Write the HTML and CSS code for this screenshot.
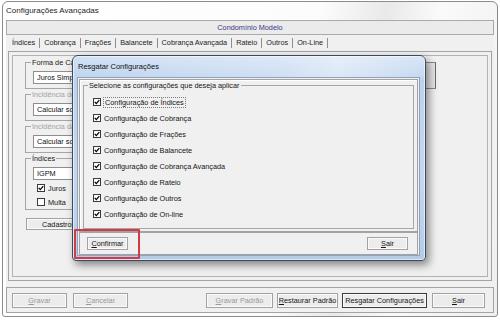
FILE: index.html
```html
<!DOCTYPE html>
<html>
<head>
<meta charset="utf-8">
<link rel="stylesheet" href="styles.css">
</head>
<body>
<div class="win">
  <div class="win-title">Configurações Avançadas</div>
  <div class="client">
    <div class="header">Condomínio Modelo</div>
    <div class="tabs">
      <span class="tab">Índices</span>
      <span class="tab">Cobrança</span>
      <span class="tab">Frações</span>
      <span class="tab">Balancete</span>
      <span class="tab">Cobrança Avançada</span>
      <span class="tab">Rateio</span>
      <span class="tab">Outros</span>
      <span class="tab">On-Line</span>
    </div>
    <div class="panel">
      <div class="panel-inner">
        <div class="left-col">
          <fieldset class="grp"><legend>Forma de Cálculo</legend><div class="edit">Juros Simples</div></fieldset>
          <fieldset class="grp dis"><legend>Incidência do Juros</legend><div class="edit">Calcular sobre o valor</div></fieldset>
          <fieldset class="grp dis"><legend>Incidência da Multa</legend><div class="edit">Calcular sobre o valor</div></fieldset>
          <fieldset class="grp g4"><legend>Índices</legend><div class="edit">IGPM</div>
            <div class="chk first"><svg class="cb" viewBox="0 0 8 8" width="8" height="8"><rect x="0.5" y="0.5" width="7" height="7" fill="#fff" stroke="#3a3a3a"/><path d="M1.7 3.9 L3.3 5.6 L6.3 2.1" fill="none" stroke="#000" stroke-width="1.3"/></svg><span>Juros</span></div>
            <div class="chk"><svg class="cb" viewBox="0 0 8 8" width="8" height="8"><rect x="0.5" y="0.5" width="7" height="7" fill="#fff" stroke="#3a3a3a"/></svg><span>Multa</span></div>
          </fieldset>
          <div class="btn cad">Cadastros de Índices</div>
        </div>
        <div class="right-col"><div class="hidden-box"></div></div>
      </div>
    </div>
    <div class="btnbar">
      <div class="btn dis w55"><u>G</u>ravar</div>
      <div class="btn dis w55 ml6"><u>C</u>ancelar</div>
      <div class="spacer"></div>
      <div class="btn dis w67"><u>G</u>ravar Padrão</div>
      <div class="btn w61 ml4"><u>R</u>estaurar Padrão</div>
      <div class="btn def w85 ml4">Resgatar Configurações</div>
      <div class="btn w53 ml5"><u>S</u>air</div>
    </div>
  </div>
</div>

<div class="dlg">
  <div class="dlg-title">Resgatar Configurações</div>
  <div class="dlg-client">
    <div class="dlg-top">
      <fieldset class="sel">
        <legend>Selecione as configurações que deseja aplicar</legend>
        <div class="row"><svg class="cb" viewBox="0 0 8 8" width="8" height="8"><rect x="0.5" y="0.5" width="7" height="7" fill="#fff" stroke="#3a3a3a"/><path d="M1.7 3.9 L3.3 5.6 L6.3 2.1" fill="none" stroke="#000" stroke-width="1.3"/></svg><span class="focus">Configuração de Índices</span></div>
        <div class="row"><svg class="cb" viewBox="0 0 8 8" width="8" height="8"><rect x="0.5" y="0.5" width="7" height="7" fill="#fff" stroke="#3a3a3a"/><path d="M1.7 3.9 L3.3 5.6 L6.3 2.1" fill="none" stroke="#000" stroke-width="1.3"/></svg><span>Configuração de Cobrança</span></div>
        <div class="row"><svg class="cb" viewBox="0 0 8 8" width="8" height="8"><rect x="0.5" y="0.5" width="7" height="7" fill="#fff" stroke="#3a3a3a"/><path d="M1.7 3.9 L3.3 5.6 L6.3 2.1" fill="none" stroke="#000" stroke-width="1.3"/></svg><span>Configuração de Frações</span></div>
        <div class="row"><svg class="cb" viewBox="0 0 8 8" width="8" height="8"><rect x="0.5" y="0.5" width="7" height="7" fill="#fff" stroke="#3a3a3a"/><path d="M1.7 3.9 L3.3 5.6 L6.3 2.1" fill="none" stroke="#000" stroke-width="1.3"/></svg><span>Configuração de Balancete</span></div>
        <div class="row"><svg class="cb" viewBox="0 0 8 8" width="8" height="8"><rect x="0.5" y="0.5" width="7" height="7" fill="#fff" stroke="#3a3a3a"/><path d="M1.7 3.9 L3.3 5.6 L6.3 2.1" fill="none" stroke="#000" stroke-width="1.3"/></svg><span>Configuração de Cobrança Avançada</span></div>
        <div class="row"><svg class="cb" viewBox="0 0 8 8" width="8" height="8"><rect x="0.5" y="0.5" width="7" height="7" fill="#fff" stroke="#3a3a3a"/><path d="M1.7 3.9 L3.3 5.6 L6.3 2.1" fill="none" stroke="#000" stroke-width="1.3"/></svg><span>Configuração de Rateio</span></div>
        <div class="row"><svg class="cb" viewBox="0 0 8 8" width="8" height="8"><rect x="0.5" y="0.5" width="7" height="7" fill="#fff" stroke="#3a3a3a"/><path d="M1.7 3.9 L3.3 5.6 L6.3 2.1" fill="none" stroke="#000" stroke-width="1.3"/></svg><span>Configuração de Outros</span></div>
        <div class="row"><svg class="cb" viewBox="0 0 8 8" width="8" height="8"><rect x="0.5" y="0.5" width="7" height="7" fill="#fff" stroke="#3a3a3a"/><path d="M1.7 3.9 L3.3 5.6 L6.3 2.1" fill="none" stroke="#000" stroke-width="1.3"/></svg><span>Configuração de On-line</span></div>
      </fieldset>
    </div>
    <div class="dlg-bottom">
      <div class="btn dbtn"><u>C</u>onfirmar</div>
      <div class="btn dbtn"><u>S</u>air</div>
    </div>
  </div>
  <div class="highlight"></div>
</div>
</body>
</html>
```
FILE: styles.css
```css
* { box-sizing: border-box; }
html, body { margin: 0; padding: 0; }
body {
  width: 500px; height: 320px; overflow: hidden; position: relative;
  background: #fff;
  font-family: "Liberation Sans", Arial, sans-serif;
  font-size: 7.3px; color: #151515;
}
u { text-decoration: underline; text-underline-offset: 1px; }

/* main window */
.win {
  margin: 1px 0 0 2px; width: 496px; height: 316px;
  border: 1px solid #8c8c8c; border-radius: 6px 6px 3px 3px;
  background: linear-gradient(100deg, #ffffff 0%, #fcfcfc 58%, #e9e9e9 70%, #fafafa 80%, #efefef 100%);
  display: flex; flex-direction: column;
}
.win-title { height: 18px; line-height: 17px; padding-left: 3px; font-size: 8px; color: #1e1e1e; }
.client {
  flex: 1; margin: 0 3px 3px 3px; background: #f0f0f0;
  display: flex; flex-direction: column;
}
.header {
  height: 15px; line-height: 13px; text-align: center;
  border: 1px solid #a9a9a9; background: #ebebeb; color: #36368a;
}
.tabs { height: 16px; display: flex; align-items: center; padding-left: 2px; }
.tab { padding: 0 4px; line-height: 10px; border-right: 1px solid #8e8e8e; color: #222; }

.panel { flex: 1; margin: 0 2px; border: 1px solid #a3a3a3; padding: 3px; display: flex; }
.panel-inner { flex: 1; border: 1px solid #b2b2b2; display: flex; }
.left-col { width: 175px; padding: 1.5px 0 0 12px; display: flex; flex-direction: column; align-items: flex-start; }
.right-col { flex: 1; padding: 6px 51px 0 0; display: flex; justify-content: flex-end; align-items: flex-start; }
.hidden-box { width: 100px; height: 27px; border: 1px solid #8a8a8a; border-right-color: #6a6a6a; background: #e6e6e6; }

.grp {
  margin: 0 0 1px 0; padding: 4px 7px 4px 7px; width: 160px;
  border: 1px solid #a6a6a6; min-width: 0;
}
.grp legend { margin-left: -2px; padding: 0 1px; line-height: 9px; color: #1a1a1a; }
.grp.dis legend { color: #a3a3a3; }
.grp.g4 { padding-bottom: 0; }
.edit {
  height: 13px; width: 140px; border: 1px solid #8e8e8e; background: #fff;
  line-height: 11px; padding-left: 3px; color: #111; white-space: nowrap;
}
.chk { height: 14px; display: flex; align-items: center; gap: 3px; padding-left: 4px; }
.chk.first { margin-top: 1.5px; }
.cb { display: block; flex: none; }

.btn {
  height: 15px; border: 1px solid #a2a2a2; background: #ececec;
  box-shadow: inset 0 0 0 1px #fbfbfb;
  display: flex; align-items: center; justify-content: center;
  color: #151515; white-space: nowrap;
}
.btn.dis { color: #9a9a9a; }
.btn.def { border-color: #3c3c3c; }
.btn.cad { margin: 7px 0 0 1px; height: 12px; width: 144px; justify-content: flex-start; padding-left: 15px; }

.btnbar {
  height: 26px; margin-top: 6px; border: 1px solid #a3a3a3;
  padding: 5px 8px 0 5px; display: flex; align-items: flex-start;
}
.spacer { flex: 1; }
.w55 { width: 55px; } .w67 { width: 67px; } .w61 { width: 61px; } .w85 { width: 85px; } .w53 { width: 53px; }
.ml4 { margin-left: 4px; } .ml5 { margin-left: 5px; } .ml6 { margin-left: 6px; }

/* dialog (floating window) */
.dlg {
  position: absolute; left: 72px; top: 55px; width: 354px; height: 206px;
  border: 1px solid #3b4a5e; border-radius: 6px 6px 4px 4px;
  background: linear-gradient(180deg, #d3e2f5 0%, #bcd2ee 12%, #c4d7f0 60%, #b4cbea 100%);
  box-shadow: 3px 4px 9px rgba(0,0,0,0.45), inset 0 0 0 1px rgba(255,255,255,0.55);
  display: flex; flex-direction: column;
}
.dlg-title {
  height: 21px; line-height: 21px; padding-left: 5px; font-size: 7.5px; color: #111;
  background: linear-gradient(100deg, rgba(255,255,255,0.0) 0%, rgba(255,255,255,0.25) 60%, rgba(255,255,255,0.45) 75%, rgba(255,255,255,0.1) 100%);
}
.dlg-client {
  flex: 1; margin: 0 5px 4px 4px; background: #f0f0f0;
  border: 1px solid #8fa3bd; padding: 1px 1px 0 1px;
  display: flex; flex-direction: column;
}
.dlg-top { border: 1px solid #a3a3a3; padding: 1px 3px 2px 3px; box-shadow: inset 1px 1px 0 #fff; }
.sel { margin: 0; padding: 4px 9px 6px 9px; border: 1px solid #a6a6a6; min-width: 0; }
.sel legend { margin-left: -5px; padding: 0 1px; line-height: 9px; color: #151515; }
.row { height: 16px; display: flex; align-items: center; gap: 3px; }
.focus { outline: 1px dotted #7a7a7a; outline-offset: 0; padding: 0 1px; line-height: 9px; }
.dlg-bottom {
  flex: 1; margin-top: 0; border: 1px solid #a3a3a3;
  display: flex; align-items: center; justify-content: space-between;
  padding: 0 9px 0 7px;
}
.btn.dbtn { width: 41px; height: 13px; }
.highlight {
  position: absolute; left: 1px; top: 173px; width: 66px; height: 30px;
  border: 2px solid #d23a44; border-radius: 1px;
}
```
